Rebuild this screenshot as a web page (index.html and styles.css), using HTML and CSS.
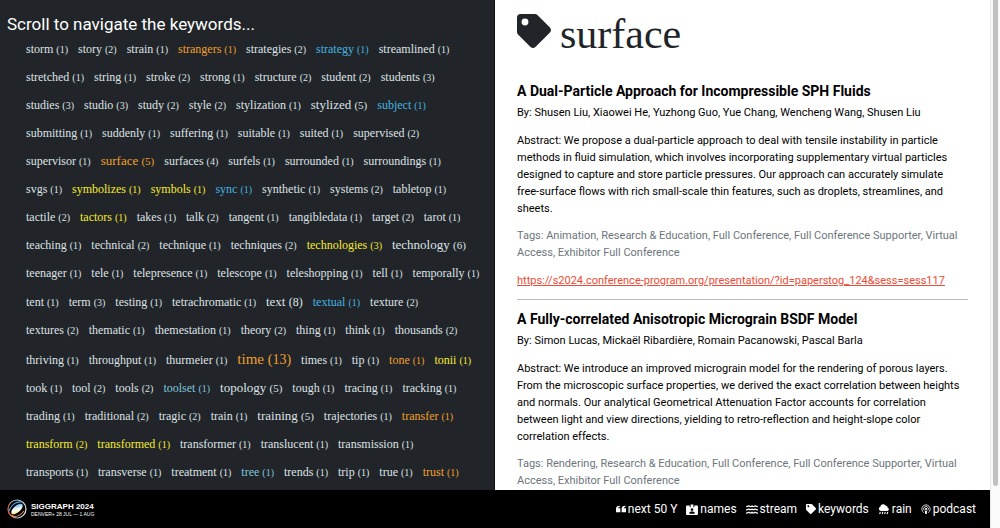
FILE: index.html
```
<!DOCTYPE html>
<html lang="en">
<head>
<meta charset="utf-8">
<title>SIGGRAPH 2024 keywords</title>
<link rel="stylesheet" href="styles.css">
</head>
<body>
<svg class="defs" aria-hidden="true">
  <symbol id="tag" viewBox="0 0 512 512"><path fill="currentColor" d="M0 252V48C0 21 21 0 48 0h204a48 48 0 0 1 34 14l176 176c19 19 19 49 0 68L258 462c-19 19-49 19-68 0L14 286A48 48 0 0 1 0 252zM112 64a48 48 0 1 0 0 96 48 48 0 0 0 0-96z" transform="scale(1.075)"/></symbol>
</svg>
<div class="app">
<div class="page">
  <main class="panels">
    <section class="keywords">
      <h2 class="hint">Scroll to navigate the keywords...</h2>
      <div class="cloud">
        <div class="row"><a href="#">storm <span>(1)</span></a><a href="#">story <span>(2)</span></a><a href="#">strain <span>(1)</span></a><a href="#" class="orange">strangers <span>(1)</span></a><a href="#">strategies <span>(2)</span></a><a href="#" class="blue">strategy <span>(1)</span></a><a href="#">streamlined <span>(1)</span></a></div>
        <div class="row"><a href="#">stretched <span>(1)</span></a><a href="#">string <span>(1)</span></a><a href="#">stroke <span>(2)</span></a><a href="#">strong <span>(1)</span></a><a href="#">structure <span>(2)</span></a><a href="#">student <span>(2)</span></a><a href="#">students <span>(3)</span></a></div>
        <div class="row"><a href="#">studies <span>(3)</span></a><a href="#">studio <span>(3)</span></a><a href="#">study <span>(2)</span></a><a href="#">style <span>(2)</span></a><a href="#">stylization <span>(1)</span></a><a href="#" class="mid">stylized <span>(5)</span></a><a href="#" class="blue">subject <span>(1)</span></a></div>
        <div class="row"><a href="#">submitting <span>(1)</span></a><a href="#">suddenly <span>(1)</span></a><a href="#">suffering <span>(1)</span></a><a href="#">suitable <span>(1)</span></a><a href="#">suited <span>(1)</span></a><a href="#">supervised <span>(2)</span></a></div>
        <div class="row"><a href="#">supervisor <span>(1)</span></a><a href="#" class="mid orange">surface <span>(5)</span></a><a href="#">surfaces <span>(4)</span></a><a href="#">surfels <span>(1)</span></a><a href="#">surrounded <span>(1)</span></a><a href="#">surroundings <span>(1)</span></a></div>
        <div class="row"><a href="#">svgs <span>(1)</span></a><a href="#" class="yellow">symbolizes <span>(1)</span></a><a href="#" class="yellow">symbols <span>(1)</span></a><a href="#" class="blue">sync <span>(1)</span></a><a href="#">synthetic <span>(1)</span></a><a href="#">systems <span>(2)</span></a><a href="#">tabletop <span>(1)</span></a></div>
        <div class="row"><a href="#">tactile <span>(2)</span></a><a href="#" class="yellow">tactors <span>(1)</span></a><a href="#">takes <span>(1)</span></a><a href="#">talk <span>(2)</span></a><a href="#">tangent <span>(1)</span></a><a href="#">tangibledata <span>(1)</span></a><a href="#">target <span>(2)</span></a><a href="#">tarot <span>(1)</span></a></div>
        <div class="row"><a href="#">teaching <span>(1)</span></a><a href="#">technical <span>(2)</span></a><a href="#">technique <span>(1)</span></a><a href="#">techniques <span>(2)</span></a><a href="#" class="yellow">technologies <span>(3)</span></a><a href="#" class="mid">technology <span>(6)</span></a></div>
        <div class="row"><a href="#">teenager <span>(1)</span></a><a href="#">tele <span>(1)</span></a><a href="#">telepresence <span>(1)</span></a><a href="#">telescope <span>(1)</span></a><a href="#">teleshopping <span>(1)</span></a><a href="#">tell <span>(1)</span></a><a href="#">temporally <span>(1)</span></a></div>
        <div class="row"><a href="#">tent <span>(1)</span></a><a href="#">term <span>(3)</span></a><a href="#">testing <span>(1)</span></a><a href="#">tetrachromatic <span>(1)</span></a><a href="#" class="large">text <span>(8)</span></a><a href="#" class="blue">textual <span>(1)</span></a><a href="#">texture <span>(2)</span></a></div>
        <div class="row"><a href="#">textures <span>(2)</span></a><a href="#">thematic <span>(1)</span></a><a href="#">themestation <span>(1)</span></a><a href="#">theory <span>(2)</span></a><a href="#">thing <span>(1)</span></a><a href="#">think <span>(1)</span></a><a href="#">thousands <span>(2)</span></a></div>
        <div class="row"><a href="#">thriving <span>(1)</span></a><a href="#">throughput <span>(1)</span></a><a href="#">thurmeier <span>(1)</span></a><a href="#" class="huge orange">time <span>(13)</span></a><a href="#">times <span>(1)</span></a><a href="#">tip <span>(1)</span></a><a href="#" class="orange">tone <span>(1)</span></a><a href="#" class="yellow">tonii <span>(1)</span></a></div>
        <div class="row"><a href="#">took <span>(1)</span></a><a href="#">tool <span>(2)</span></a><a href="#">tools <span>(2)</span></a><a href="#" class="pale">toolset <span>(1)</span></a><a href="#" class="mid">topology <span>(5)</span></a><a href="#">tough <span>(1)</span></a><a href="#">tracing <span>(1)</span></a><a href="#">tracking <span>(1)</span></a></div>
        <div class="row"><a href="#">trading <span>(1)</span></a><a href="#">traditional <span>(2)</span></a><a href="#">tragic <span>(2)</span></a><a href="#">train <span>(1)</span></a><a href="#" class="mid">training <span>(5)</span></a><a href="#">trajectories <span>(1)</span></a><a href="#" class="orange">transfer <span>(1)</span></a></div>
        <div class="row"><a href="#" class="yellow">transform <span>(2)</span></a><a href="#" class="yellow">transformed <span>(1)</span></a><a href="#">transformer <span>(1)</span></a><a href="#">translucent <span>(1)</span></a><a href="#">transmission <span>(1)</span></a></div>
        <div class="row"><a href="#">transports <span>(1)</span></a><a href="#">transverse <span>(1)</span></a><a href="#">treatment <span>(1)</span></a><a href="#" class="pale">tree <span>(1)</span></a><a href="#">trends <span>(1)</span></a><a href="#">trip <span>(1)</span></a><a href="#">true <span>(1)</span></a><a href="#" class="orange">trust <span>(1)</span></a></div>
      </div>
    </section>
    <section class="results">
      <h1 class="topic"><svg class="topic-icon"><use href="#tag"/></svg>surface</h1>
      <article class="paper">
        <h3>A Dual-Particle Approach for Incompressible SPH Fluids</h3>
        <p class="authors">By: Shusen Liu, Xiaowei He, Yuzhong Guo, Yue Chang, Wencheng Wang, Shusen Liu</p>
        <p class="abstract">Abstract: We propose a dual-particle approach to deal with tensile instability in particle<br>methods in fluid simulation, which involves incorporating supplementary virtual particles<br>designed to capture and store particle pressures. Our approach can accurately simulate<br>free-surface flows with rich small-scale thin features, such as droplets, streamlines, and<br>sheets.</p>
        <p class="tags">Tags: Animation, Research &amp; Education, Full Conference, Full Conference Supporter, Virtual<br>Access, Exhibitor Full Conference</p>
        <a class="source" href="#">https://s2024.conference-program.org/presentation/?id=paperstog_124&amp;sess=sess117</a>
      </article>
      <article class="paper">
        <h3>A Fully-correlated Anisotropic Micrograin BSDF Model</h3>
        <p class="authors">By: Simon Lucas, Mickaël Ribardière, Romain Pacanowski, Pascal Barla</p>
        <p class="abstract">Abstract: We introduce an improved micrograin model for the rendering of porous layers.<br>From the microscopic surface properties, we derived the exact correlation between heights<br>and normals. Our analytical Geometrical Attenuation Factor accounts for correlation<br>between light and view directions, yielding to retro-reflection and height-slope color<br>correlation effects.</p>
        <p class="tags">Tags: Rendering, Research &amp; Education, Full Conference, Full Conference Supporter, Virtual<br>Access, Exhibitor Full Conference</p>
      </article>
    </section>
  </main>
  <footer class="bar">
    <div class="brand">
      <svg class="logo" viewBox="0 0 20 20">
        <defs>
          <linearGradient id="ring" x1="0" y1="0.6" x2="1" y2="0.4"><stop offset="0" stop-color="#f26a3a"/><stop offset=".4" stop-color="#8bb8dc"/><stop offset="1" stop-color="#e8edf2"/></linearGradient>
          <linearGradient id="lens" x1="0" y1="1" x2="1" y2="0"><stop offset="0" stop-color="#f7e04a"/><stop offset=".45" stop-color="#fff"/><stop offset="1" stop-color="#3aa0e0"/></linearGradient>
        </defs>
        <circle cx="10" cy="10" r="9" fill="none" stroke="url(#ring)" stroke-width="1.2"/>
        <ellipse cx="10" cy="10" rx="7" ry="3.4" fill="url(#lens)" transform="rotate(-42 10 10)"/>
        <path d="M2 12C4 6 9 2 15 3" fill="none" stroke="#4aa3dd" stroke-width="1.2"/>
        <path d="M4 16c4 3 9 1 13-4" fill="none" stroke="#ef8a3c" stroke-width="1.2"/>
      </svg>
      <div><strong>SIGGRAPH 2024</strong><small>DENVER+ 28 JUL — 1 AUG</small></div>
    </div>
    <nav class="links">
      <a href="#"><svg viewBox="0 0 12 12"><path fill="currentColor" d="M0 6V5.500Q0 2 4.500 2V3.600Q2.500 3.600 2.500 5H5.200V10H0zM6.800 6V5.500Q6.800 2 11.300 2V3.600Q9.300 3.600 9.300 5H12V10H6.800z"/></svg>next 50 Y</a>
      <a href="#"><svg class="wide" viewBox="0 0 13 12"><path fill="currentColor" fill-rule="evenodd" d="M0 2.500Q0 1.500 1 1.500H4V3.500H5V.5H8V3.500H9V1.500H12Q13 1.500 13 2.500V11Q13 12 12 12H1Q0 12 0 11zM6.500 4.500a1.500 1.500 0 1 0 0 3 1.500 1.500 0 0 0 0-3zM3.500 10.500h6Q9.500 8.200 7.500 8.200h-2Q3.500 8.200 3.500 10.500z"/></svg>names</a>
      <a href="#"><svg class="wide" viewBox="0 0 13 12"><path fill="none" stroke="currentColor" stroke-width="1.300" d="M0 3q1.600 0 3.200-1 1.600 1.500 3.300 0 1.600 1.500 3.300 0 1.600 1 3.200 1M0 6.500q1.600 0 3.200-1 1.600 1.500 3.300 0 1.600 1.500 3.300 0 1.600 1 3.200 1M0 10q1.600 0 3.200-1 1.600 1.500 3.300 0 1.600 1.500 3.300 0 1.600 1 3.200 1"/></svg>stream</a>
      <a href="#"><svg><use href="#tag"/></svg>keywords</a>
      <a href="#"><svg class="wide" viewBox="0 0 12 12"><path fill="currentColor" d="M2.500 7.500A2.300 2.300 0 0 1 2 3 3.200 3.200 0 0 1 8 2a2 2 0 0 1 2 2 1.800 1.800 0 0 1-.3 3.500z"/><path stroke="currentColor" stroke-width="1.200" d="M2 8.500L1.300 11M4.700 8.500L4 11M7.400 8.500L6.700 11M10.100 8.500L9.400 11"/></svg>rain</a>
      <a href="#"><svg viewBox="0 0 12 12"><path fill="none" stroke="currentColor" d="M3.300 10.300A5 5 0 1 1 8.700 10.300M3.800 7.600A2.800 2.800 0 1 1 8.200 7.600"/><circle cx="6" cy="6" r="1.300" fill="currentColor"/><path fill="currentColor" d="M4.600 8h2.800L6.900 12H5.100z"/></svg>podcast</a>
    </nav>
  </footer>
</div>
<div class="scrollbar"><div class="thumb"></div></div>
</div>
</body>
</html>
```
FILE: styles.css
```
* { box-sizing: border-box; }
body { margin: 0; background: #fff; font-family: Roboto, sans-serif; font-size: 11px; color: #000; }
h1, h2, h3, p { margin: 0; font-weight: 400; }
a { color: inherit; text-decoration: none; }
.defs { position: absolute; width: 0; height: 0; }

.app { display: flex; height: 100vh; overflow: hidden; }
.page { flex: 1; min-width: 0; display: flex; flex-direction: column; }
.panels { flex: 1; min-height: 0; display: grid; grid-template-columns: minmax(0, 1fr) minmax(0, 1fr); }

.keywords { background: #212529; padding-top: 14px; overflow: hidden; border-right: 1px solid #0c0e10; }
.hint { padding-left: 7px; font-size: 17px; line-height: 21px; color: #fff; }
.cloud { padding-left: 26px; font-family: "Liberation Serif", serif; color: #dee2e6; white-space: nowrap; }
.row { display: flex; align-items: baseline; gap: 10px; }
.row a { font-size: 12px; line-height: 28px; }
.row span { font-size: 10px; line-height: 20px; }
.row .mid { font-size: 13px; }
.row .mid span { font-size: 11px; }
.row .large { font-size: 13px; line-height: 29px; }
.row .large span { font-size: 12px; }
.row .huge { font-size: 15px; line-height: 30px; }
.row .huge span { font-size: 14px; }
.orange { color: #f0a02c; }
.yellow { color: #f5e92f; }
.blue { color: #45b3e0; }
.pale { color: #7fc4dc; }

.results { background: #fff; padding: 10px 22px 0; overflow: hidden; }
.topic { display: flex; align-items: center; gap: 9px; height: 48px; font-family: "Liberation Serif", serif; font-size: 42px; line-height: 48px; color: #212529; }
.topic-icon { width: 34px; height: 34px; margin-bottom: 6px; }
.paper { padding: 9px 0 10px; border-bottom: 1px solid #bbb; }
.topic + .paper { margin-top: 14px; }
.paper h3 { font-size: 14px; font-weight: 700; line-height: 20px; }
.authors { margin-top: 3px; line-height: 17px; }
.abstract { margin-top: 11px; line-height: 17px; white-space: nowrap; }
.tags { margin-top: 10px; line-height: 17px; color: #6c757d; white-space: nowrap; }
.source { display: block; margin-top: 11px; line-height: 17px; color: #f04a35; text-decoration: underline; }

.bar { display: flex; align-items: center; justify-content: space-between; height: 38px; padding: 0 14px 0 7px; background: #000; color: #fff; }
.brand { display: flex; align-items: center; gap: 4px; font-family: "Liberation Sans", sans-serif; }
.logo { width: 20px; height: 20px; }
.brand strong { display: block; font-size: 8px; line-height: 9px; }
.brand small { display: block; font-size: 5px; line-height: 6px; }
.links { display: flex; gap: 9px; font-size: 12px; }
.links a { display: flex; align-items: center; gap: 2px; line-height: 16px; }
.links svg { width: 10px; height: 10px; }
.links .wide { width: 12px; height: 11px; }

.scrollbar { width: 10px; background: #fafafa; border-left: 1px solid #e8e8e8; padding: 0 2px; }
.thumb { height: 92vh; background: #c1c1c1; border-radius: 0 0 3px 3px; }
```
